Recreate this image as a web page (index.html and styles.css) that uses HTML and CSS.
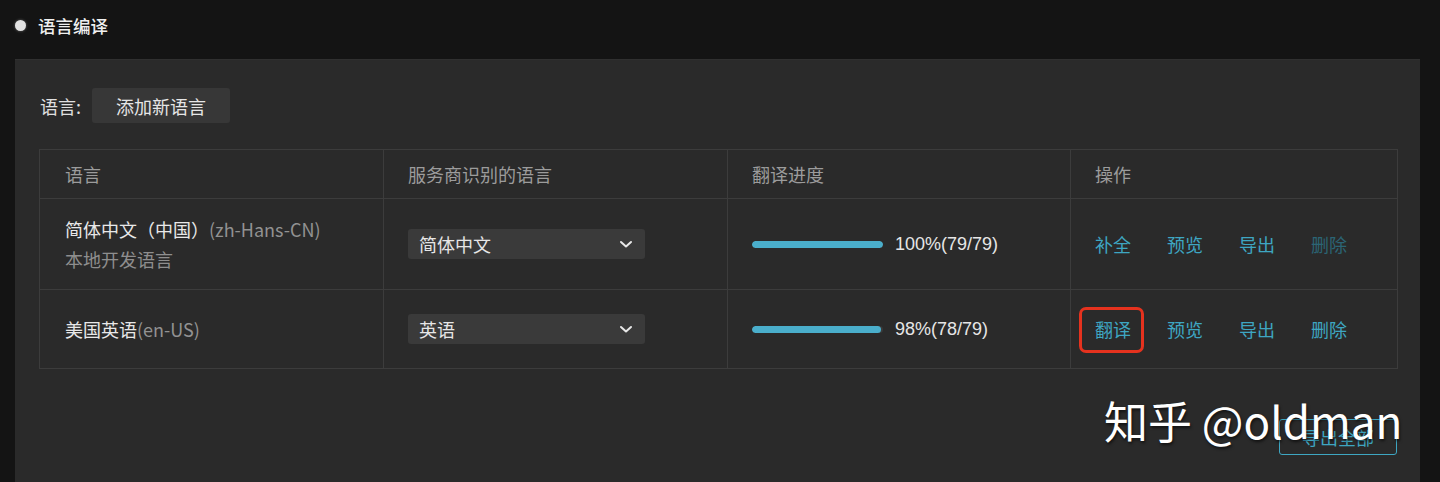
FILE: index.html
```html
<!DOCTYPE html>
<html lang="zh-CN">
<head>
<meta charset="utf-8">
<link rel="stylesheet" href="styles.css">
</head>
<body>
<div class="page">
  <div class="page-head">
    <span class="dot"></span>
    <span class="page-title">语言编译</span>
  </div>
  <div class="panel">
    <div class="lang-row">
      <span class="lang-label">语言:</span>
      <button class="btn-add">添加新语言</button>
    </div>
    <table class="lang-table">
      <colgroup>
        <col class="c1"><col class="c2"><col class="c3"><col class="c4">
      </colgroup>
      <thead>
        <tr class="head-row">
          <th>语言</th>
          <th>服务商识别的语言</th>
          <th>翻译进度</th>
          <th>操作</th>
        </tr>
      </thead>
      <tbody>
        <tr class="row-1">
          <td>
            <div class="lang-name">简体中文（中国）<span class="code">(zh-Hans-CN)</span></div>
            <div class="lang-sub">本地开发语言</div>
          </td>
          <td>
            <div class="select"><span>简体中文</span>
              <svg class="chev" width="14" height="9" viewBox="0 0 14 9"><path d="M2 2 L7 6.5 L12 2" fill="none" stroke="#e8e8e8" stroke-width="2" stroke-linecap="round" stroke-linejoin="round"/></svg>
            </div>
          </td>
          <td>
            <div class="progress"><div class="track"><div class="fill" style="width:100%"></div></div><span class="pct">100%(79/79)</span></div>
          </td>
          <td>
            <div class="actions">
              <a class="act">补全</a><a class="act">预览</a><a class="act">导出</a><a class="act disabled">删除</a>
            </div>
          </td>
        </tr>
        <tr class="row-2">
          <td>
            <div class="lang-name">美国英语<span class="code">(en-US)</span></div>
          </td>
          <td>
            <div class="select"><span>英语</span>
              <svg class="chev" width="14" height="9" viewBox="0 0 14 9"><path d="M2 2 L7 6.5 L12 2" fill="none" stroke="#e8e8e8" stroke-width="2" stroke-linecap="round" stroke-linejoin="round"/></svg>
            </div>
          </td>
          <td>
            <div class="progress"><div class="track"><div class="fill" style="width:98.5%"></div></div><span class="pct">98%(78/79)</span></div>
          </td>
          <td>
            <div class="actions">
              <a class="act highlighted">翻译</a><a class="act">预览</a><a class="act">导出</a><a class="act">删除</a>
            </div>
          </td>
        </tr>
      </tbody>
    </table>
    <div class="foot-row">
      <button class="btn-export">导出全部</button>
    </div>
  </div>
  <div class="watermark">知乎 @oldman</div>
</div>
</body>
</html>
```

FILE: styles.css
```css
* { box-sizing: border-box; }
html, body {
  margin: 0;
  padding: 0;
  background: #141414;
  height: 482px;
  overflow: hidden;
}
body {
  font-family: "Noto Sans CJK SC", "Noto Sans", sans-serif;
  color: #e6e6e6;
}
.page {
  position: relative;
  height: 482px;
}
.page-head {
  height: 54px;
  display: flex;
  align-items: center;
  padding: 0 0 4px 15px;
  gap: 12px;
}
.dot {
  width: 11px;
  height: 11px;
  border-radius: 50%;
  background: #e2e2e2;
  box-shadow: 0 0 3px rgba(255,255,255,0.35);
}
.page-title {
  font-size: 17.5px;
  font-weight: 500;
  color: #f0f0f0;
}
.panel {
  margin: 5px 20px 0 15px;
  background: #2a2a2a;
  height: 440px;
  padding: 28px 24px 0 24px;
  border-top: 1px solid #303030;
}
.lang-row {
  display: flex;
  align-items: center;
  height: 35px;
}
.lang-label {
  font-size: 18px;
  color: #e0e0e0;
  width: 53px;
  padding-left: 1px;
}
.btn-add {
  height: 35px;
  padding: 0 24px;
  background: #373737;
  border: none;
  border-radius: 3px;
  color: #e6e6e6;
  font-family: inherit;
  font-size: 18px;
}
.lang-table {
  margin-top: 26px;
  width: 1358px;
  border-collapse: collapse;
  table-layout: fixed;
  font-size: 18px;
}
.c1 { width: 344px; }
.c2 { width: 344px; }
.c3 { width: 343px; }
.c4 { width: 327px; }
.lang-table th,
.lang-table td {
  border: 1px solid #3c3c3c;
  padding: 0 0 0 24px;
  text-align: left;
  vertical-align: middle;
}
.lang-table th {
  height: 49px;
  font-weight: 400;
  color: #9c9c9c;
}
.lang-table th:first-child,
.lang-table td:first-child { padding-left: 25px; }
.row-1 td { height: 91px; }
.row-2 td { height: 79px; }
.lang-name {
  line-height: 30px;
  color: #e8e8e8;
}
.code { color: #929292; }
.lang-sub {
  line-height: 30px;
  color: #8e8e8e;
}
.select {
  width: 237px;
  height: 30px;
  background: #3a3a3a;
  border-radius: 3px;
  display: flex;
  align-items: center;
  justify-content: space-between;
  padding: 0 12px 0 11px;
  color: #e6e6e6;
}
.progress {
  display: flex;
  align-items: center;
  gap: 12px;
}
.track {
  width: 131px;
  height: 7px;
  border-radius: 4px;
  background: #3a3a3a;
  overflow: hidden;
}
.fill {
  height: 100%;
  background: #4aaecb;
  border-radius: 4px;
}
.pct {
  color: #e6e6e6;
  font-family: "Liberation Sans", "Noto Sans", sans-serif;
  font-size: 18px;
}
.actions {
  display: flex;
  gap: 36px;
}
.act {
  color: #3ea6c2;
  position: relative;
}
.act.disabled { color: #2b6575; }
.act.highlighted::after {
  content: "";
  position: absolute;
  left: -16px;
  right: -13px;
  top: -9px;
  bottom: -11px;
  border: 3px solid #e5321e;
  border-radius: 7px;
}
.foot-row {
  display: flex;
  justify-content: flex-end;
  margin-top: 50px;
  width: 1358px;
}
.btn-export {
  width: 118px;
  height: 36px;
  background: transparent;
  border: 1px solid #3ea6c2;
  border-radius: 3px;
  color: #3ea6c2;
  font-family: inherit;
  font-size: 18px;
}
.watermark {
  position: absolute;
  left: 1104px;
  top: 390px;
  font-size: 44px;
  line-height: 60px;
  color: #ffffff;
  font-family: "Noto Sans CJK SC", "Noto Sans", sans-serif;
  text-shadow: 1px 2px 3px rgba(0,0,0,0.6);
  white-space: nowrap;
}
```
